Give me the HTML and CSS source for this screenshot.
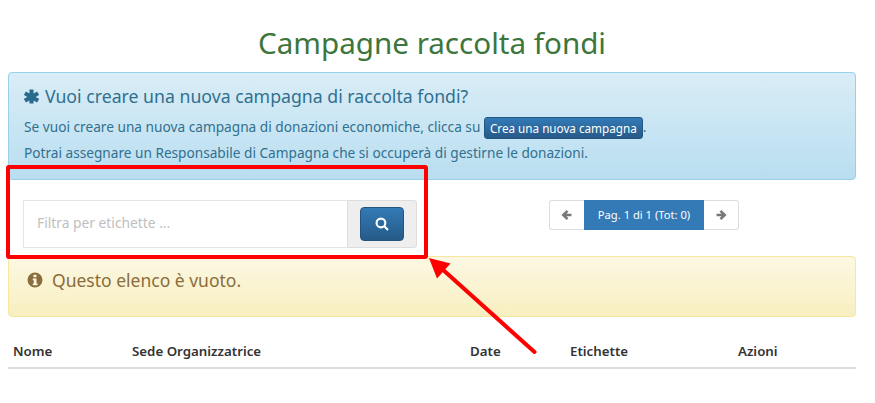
FILE: index.html
```html
<!DOCTYPE html>
<html lang="it">
<head>
<meta charset="utf-8">
<title>Campagne raccolta fondi</title>
<link rel="stylesheet" href="styles.css">
</head>
<body>
<div class="page">
  <h1 class="title">Campagne raccolta fondi</h1>
  <div class="alert info">
    <h4 class="info-head"><svg class="ico-ast" viewBox="0 0 16 16"><path d="M5.800 0.500h4.400v4.300l3.800-2.200 2.200 3.800L12.400 8.500l3.800 2.100-2.200 3.800-3.800-2.200v3.300H5.800v-3.300L2 14.400l-2.200-3.800 3.800-2.100L-.2 6.400 2 2.600l3.800 2.200z"/></svg>Vuoi creare una nuova campagna di raccolta fondi?</h4>
    <p class="line">Se vuoi creare una nuova campagna di donazioni economiche, clicca su <a class="btn-create">Crea una nuova campagna</a>.</p>
    <p class="line second">Potrai assegnare un Responsabile di Campagna che si occuperà di gestirne le donazioni.</p>
  </div>
  <div class="tools">
    <div class="search">
      <div class="search-field">Filtra per etichette ...</div>
      <div class="search-addon"><span class="btn-search"><svg class="ico-search" viewBox="0 0 16 16"><circle cx="6.800" cy="6.800" r="5"/><path d="M10.400 10.400l4.400 4.400"/></svg></span></div>
    </div>
    <div class="pager">
      <span class="pg-arrow"><svg class="ico-arrow" viewBox="0 0 12 12"><path d="M10.500 6H2.500M6.500 1.800L2.300 6l4.200 4.200"/></svg></span>
      <span class="pg-label">Pag. 1 di 1 (Tot: 0)</span>
      <span class="pg-arrow"><svg class="ico-arrow" viewBox="0 0 12 12"><path d="M1.500 6h8M5.500 1.800L9.700 6l-4.200 4.200"/></svg></span>
    </div>
  </div>
  <div class="alert warn"><svg class="ico-info" viewBox="0 0 16 16"><circle cx="8" cy="8" r="7.500"/><path class="cut" d="M6.500 2.800h3v2.400h-3zM5.800 6.600h3.700v5h1v1.600H5.800v-1.600h1V8.200h-1z"/></svg>Questo elenco è vuoto.</div>
  <div class="thead">
    <span class="th c1">Nome</span>
    <span class="th c2">Sede Organizzatrice</span>
    <span class="th c3">Date</span>
    <span class="th c4">Etichette</span>
    <span class="th c5">Azioni</span>
  </div>
</div>
<svg class="overlay" viewBox="0 0 875 403">
  <rect class="red-box" x="8" y="167" width="418" height="90" rx="1"/>
  <path class="red-line" d="M534.500 352L441 268"/>
  <path class="red-head" d="M429 258l21.500 5.500-13.500 15z"/>
</svg>
</body>
</html>
```
FILE: styles.css
```css
* { box-sizing: border-box; }
html, body { margin: 0; height: 403px; overflow: hidden; background: #fff; }
body { font-family: "Noto Sans", sans-serif; font-size: 13.650px; color: #333; position: relative; }
.page { width: 848px; margin-left: 8px; }
.title { margin: 0; height: 72px; padding-top: 23px; text-align: center; font-size: 29.600px; line-height: 40px; font-weight: 400; color: #3c763d; }
.alert { border: 1px solid; border-radius: 4px; }
.info { height: 108px; padding: 12px 15px 0; color: #31708f; border-color: #9acfea; background: linear-gradient(#d9edf7, #b9def0); }
.info-head { margin: 0; font-size: 17.700px; line-height: 22px; font-weight: 400; display: flex; align-items: center; }
.ico-ast { width: 15px; height: 15px; margin-right: 6px; fill: #2a6a8c; }
.line { margin: 9px 0 0; line-height: 22px; font-size: 13.680px; white-space: nowrap; }
.line.second { margin-top: 3px; font-size: 13.650px; }
.btn-create { display: inline-block; height: 22px; line-height: 20px; padding: 0 5px; font-size: 11.700px; color: #fff; border: 1px solid #245580; border-radius: 3px; background: linear-gradient(#337ab7, #265a88); vertical-align: middle; }
.tools { display: flex; height: 76px; padding: 20px 0 0 15px; }
.search { display: flex; width: 394px; height: 48px; }
.search-field { flex: 1; border: 1px solid #e6e6e6; border-right: 0; padding-left: 13px; line-height: 44px; color: #c0c0c0; font-size: 13.800px; }
.search-addon { width: 70px; background: #eee; border: 1px solid #ddd; border-radius: 0 3px 3px 0; display: flex; align-items: center; justify-content: center; }
.btn-search { width: 44px; height: 34px; border: 1px solid #245580; border-radius: 4px; background: linear-gradient(#337ab7, #265a88); display: flex; align-items: center; justify-content: center; }
.ico-search { width: 14px; height: 14px; fill: none; stroke: #fff; stroke-width: 2.400; }
.pager { display: flex; height: 30px; margin-left: 132px; width: 190px; font-size: 11.200px; }
.pg-arrow { width: 35px; border: 1px solid #ddd; display: flex; align-items: center; justify-content: center; }
.pg-arrow:first-child { border-radius: 3px 0 0 3px; border-right: 0; }
.pg-arrow:last-child { border-radius: 0 3px 3px 0; border-left: 0; }
.pg-label { width: 120px; background: #337ab7; color: #fff; text-align: center; line-height: 30px; }
.ico-arrow { width: 12px; height: 12px; fill: none; stroke: #777; stroke-width: 2.600; }
.warn { height: 61px; padding-left: 18px; display: flex; align-items: center; padding-bottom: 13px; font-size: 17.500px; color: #8a6d3b; border-color: #f5e79e; background: linear-gradient(#fcf8e3, #f8efc0); }
.ico-info { width: 16px; height: 16px; margin-right: 9px; fill: #8a6d3b; }
.ico-info .cut { fill: #fcf8e3; }
.thead { display: flex; height: 52px; padding-top: 24px; border-bottom: 2px solid #ddd; font-size: 13.300px; font-weight: 600; line-height: 20px; }
.th { padding-left: 5px; }
.c1 { width: 119px; }
.c2 { width: 338px; }
.c3 { width: 100px; }
.c4 { width: 168px; }
.overlay { position: absolute; left: 0; top: 0; width: 875px; height: 403px; pointer-events: none; }
.red-box { fill: none; stroke: #f00; stroke-width: 4; }
.red-line { fill: none; stroke: #f00; stroke-width: 4; stroke-linecap: round; }
.red-head { fill: #f00; }
```
